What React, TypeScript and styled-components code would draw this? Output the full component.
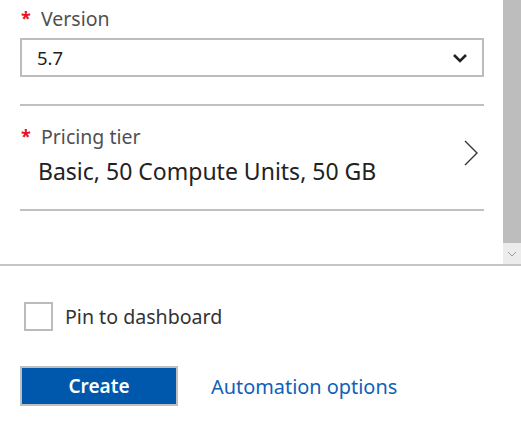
import React from "react";
import styled, {createGlobalStyle} from "styled-components";

const GlobalStyle = createGlobalStyle`
  html, body {
    margin: 0;
    padding: 0;
    background: #fff;
    font-family: "Noto Sans", "Open Sans", sans-serif;
  }
`;

const Page = styled.div`
  width: 521px;
  height: 425px;
  display: flex;
  flex-direction: column;
  overflow: hidden;
`;

const ScrollArea = styled.div`
  height: 264px;
  display: flex;
  border-bottom: 2px solid #c6c6c6;
`;

const Form = styled.div`
  flex: 1;
  padding: 0 19px 0 20px;
  display: flex;
  flex-direction: column;
`;

const Scrollbar = styled.div`
  width: 18px;
  display: flex;
  flex-direction: column;
`;

const Thumb = styled.div`
  height: 243px;
  background: #bdbdbd;
`;

const ArrowButton = styled.div`
  flex: 1;
  background: #ececec;
  display: flex;
  align-items: center;
  justify-content: center;
`;

const Label = styled.div<{ $top: number }>`
  display: flex;
  align-items: center;
  margin-top: ${({$top}) => $top}px;
  height: 24px;
  font-size: 19.5px;
  color: #505050;
`;

const Star = styled.span`
  color: #e81123;
  font-size: 18px;
  width: 20px;
  padding-left: 1px;
  align-self: flex-start;
  line-height: 24px;
  font-weight: 700;
`;

const Select = styled.div`
  margin-top: 8px;
  height: 35px;
  border: 2px solid #bdbdbd;
  display: flex;
  align-items: center;
  justify-content: space-between;
  padding: 0 14px 0 15px;
  font-size: 18.5px;
  color: #222;
`;

const Divider = styled.div<{ $top: number }>`
  margin-top: ${({$top}) => $top}px;
  height: 2px;
  background: #c0c0c0;
`;

const PickerRow = styled.div`
  display: flex;
  align-items: flex-start;
  justify-content: space-between;
`;

const PickerText = styled.div`
  display: flex;
  flex-direction: column;
`;

const Value = styled.div`
  padding-left: 18px;
  margin-top: 8px;
  font-size: 23px;
  color: #222;
  line-height: 30px;
`;

const Chevron = styled.svg`
  margin-top: 34px;
  margin-right: 5px;
`;

const Footer = styled.div`
  flex: 1;
  display: flex;
  flex-direction: column;
  padding: 36px 20px 0 20px;
`;

const CheckRow = styled.label`
  display: flex;
  align-items: center;
  gap: 12px;
  padding-left: 4px;
  font-size: 19.6px;
  color: #333;
`;

const Box = styled.span`
  width: 25px;
  height: 25px;
  border: 2px solid #bbbbbb;
  background: #fff;
`;

const Actions = styled.div`
  margin-top: 35px;
  display: flex;
  align-items: center;
  gap: 33px;
`;

const CreateButton = styled.button`
  width: 158px;
  height: 40px;
  background: #0058ad;
  border: 2px solid #bfbfbf;
  color: #fff;
  font-family: inherit;
  font-size: 19px;
  font-weight: 600;
  padding: 0;
`;

const Link = styled.a`
  color: #1160b8;
  font-size: 19.9px;
  text-decoration: none;
`;

const App: React.FC = () => {
  return (
    <Page>
      <GlobalStyle/>
      <ScrollArea>
        <Form>
          <Label $top={6}>
            <Star>*</Star>Version
          </Label>
          <Select>
            5.7
            <svg width="16" height="10" viewBox="0 0 16 10">
              <path d="M2 2 L8 8 L14 2" fill="none" stroke="#222" strokeWidth="2.6"/>
            </svg>
          </Select>
          <Divider $top={27}/>
          <PickerRow>
            <PickerText>
              <Label $top={18}>
                <Star>*</Star>Pricing tier
              </Label>
              <Value>Basic, 50 Compute Units, 50 GB</Value>
            </PickerText>
            <Chevron width="16" height="26" viewBox="0 0 16 26">
              <path d="M2 1 L14 13 L2 25" fill="none" stroke="#333" strokeWidth="1.4"/>
            </Chevron>
          </PickerRow>
          <Divider $top={23}/>
        </Form>
        <Scrollbar>
          <Thumb/>
          <ArrowButton>
            <svg width="10" height="6" viewBox="0 0 10 6">
              <path d="M1 1 L5 5 L9 1" fill="none" stroke="#9a9a9a" strokeWidth="1"/>
            </svg>
          </ArrowButton>
        </Scrollbar>
      </ScrollArea>
      <Footer>
        <CheckRow>
          <Box/>
          Pin to dashboard
        </CheckRow>
        <Actions>
          <CreateButton>Create</CreateButton>
          <Link href="#">Automation options</Link>
        </Actions>
      </Footer>
    </Page>
  );
};

export default App;
